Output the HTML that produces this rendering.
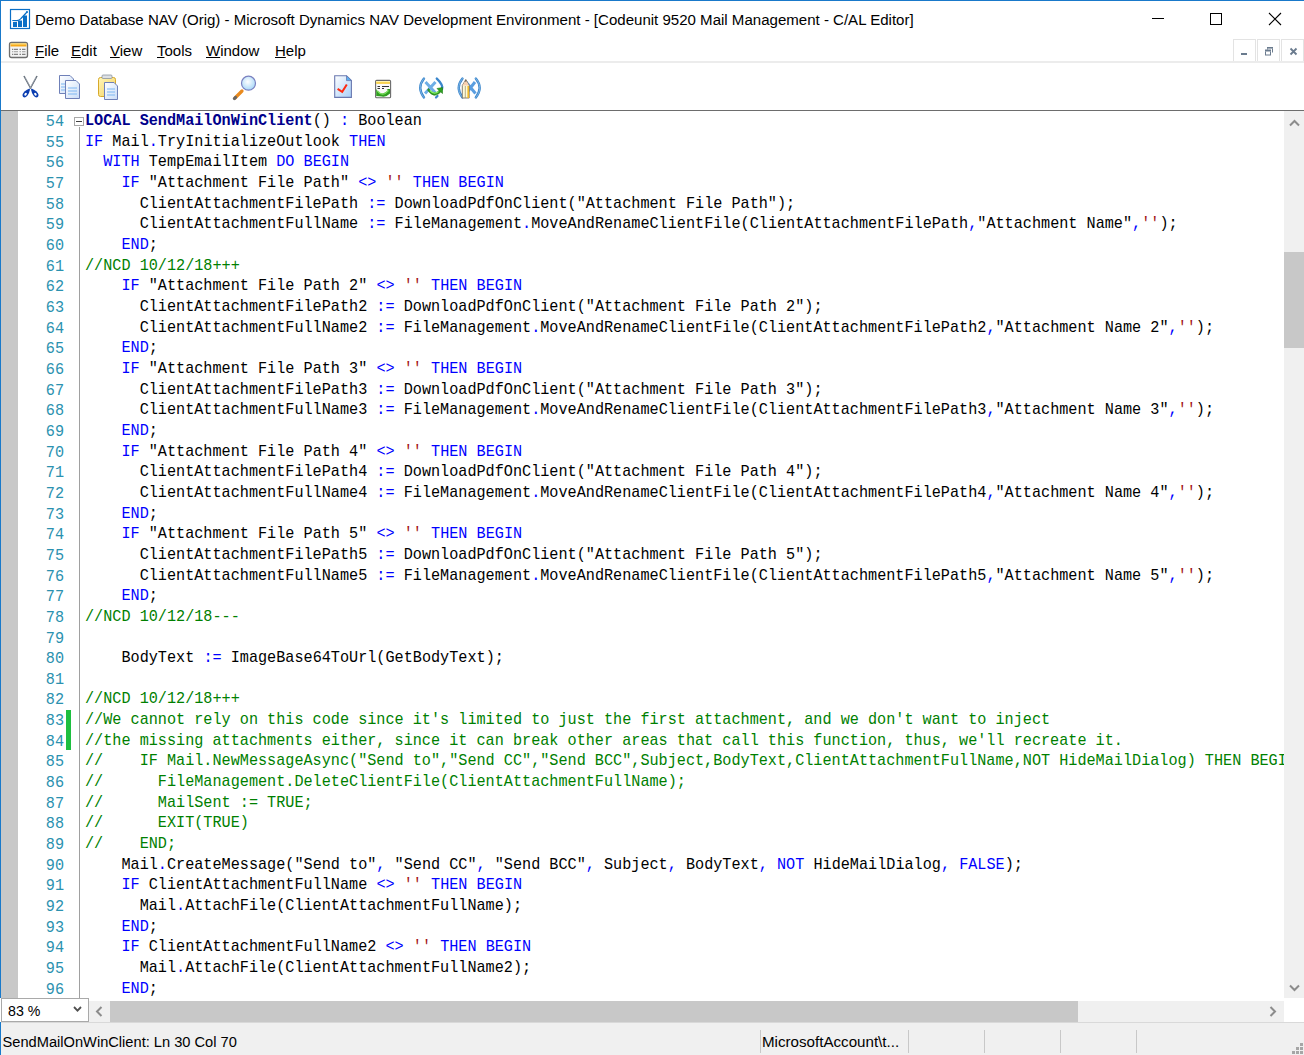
<!DOCTYPE html>
<html><head><meta charset="utf-8">
<style>
*{margin:0;padding:0;box-sizing:border-box}
html,body{width:1304px;height:1055px;overflow:hidden;background:#fff;position:relative;font-family:"Liberation Sans",sans-serif}
.abs{position:absolute}
svg{position:absolute;overflow:visible}
#wb-top{left:0;top:0;width:1304px;height:1px;background:#1979ca}
#wb-left{left:0;top:0;width:1px;height:1055px;background:#1979ca}
#title{left:35px;top:10px;font-size:15.05px;color:#000;white-space:pre;line-height:20px}
.mi{position:absolute;top:41px;font-size:15px;line-height:20px;white-space:pre;color:#000}
.mi u{text-decoration:underline;text-decoration-thickness:1px;text-underline-offset:1px}
#sep1{left:1px;top:61px;width:1303px;height:2px;background:#ececec}
#tbline{left:1px;top:110px;width:1303px;height:1px;background:#6d6d6d}
#editor{left:0;top:111px;width:1284px;height:887px;overflow:hidden}
#margin{left:1px;top:0;width:17px;height:887px;background:#c8c8c8}
#vline{left:79px;top:16px;width:1px;height:871px;background:#a0a0a0}
.ln{position:absolute;left:0;height:21px;width:1284px;font-family:"Liberation Mono",monospace;font-size:15.18px;line-height:20.66px;white-space:pre}
.num{position:absolute;top:1px;right:1220px;color:#2b91af;transform:scaleY(1.09);transform-origin:0 14.4px}
.code{position:absolute;left:85px;color:#000;transform:scaleY(1.09);transform-origin:0 14.4px}
.k{color:#0000ff}.o{color:#0000ff}.s{color:#a31515}.c{color:#008000}.b{color:#00008b;font-weight:bold}
#vsb{left:1284px;top:111px;width:20px;height:887px;background:#f0f0f0}
#vthumb{left:1284px;top:252px;width:20px;height:96px;background:#c8c8c8}
.sep{top:1030px;width:1px;height:23px;background:#c8c8c8}
#hrow{left:0;top:998px;width:1304px;height:24px;background:#fff}
#hsb{left:89px;top:1001px;width:1195px;height:21px;background:#f0f0f0}
#hthumb{left:110px;top:1001px;width:968px;height:21px;background:#c8c8c8}
#combo{left:1px;top:998px;width:88px;height:24px;border:1px solid #a9a9a9;background:#fff}
#status{left:1px;top:1022px;width:1303px;height:33px;background:#f0f0f0;border-top:1px solid #d9d9d9}
#stext{left:2.5px;top:1032px;font-size:14.65px;line-height:20px;white-space:pre;color:#000}
.mdib{position:absolute;top:39px;width:23px;height:23px;border:1px solid #e3e3e3;background:#fff}
</style></head><body>
<div id="wb-top" class="abs"></div>
<div id="wb-left" class="abs"></div>
<!-- app icon -->
<svg style="left:0;top:0" width="40" height="40" viewBox="0 0 40 40">
 <rect x="10.5" y="9.5" width="19" height="19" fill="#fff" stroke="#0a6fc6" stroke-width="1.2"/>
 <rect x="13" y="22" width="4" height="5" fill="#0a6fc6"/>
 <rect x="18" y="20.5" width="4" height="6.5" fill="#0a6fc6"/>
 <rect x="23" y="15.5" width="4" height="11.5" fill="#0a6fc6"/>
 <path d="M12.3 20.5 L17 20.6 Q19.5 20.4 21 18.5 L27 12" fill="none" stroke="#0a6fc6" stroke-width="1.2"/>
 <circle cx="27" cy="12" r="1" fill="#0a6fc6"/>
</svg>
<div id="title" class="abs">Demo Database NAV (Orig) - Microsoft Dynamics NAV Development Environment - [Codeunit 9520 Mail Management - C/AL Editor]</div>
<!-- window controls -->
<svg style="left:1140px;top:0" width="164" height="38" viewBox="0 0 164 38">
 <line x1="12" y1="18.5" x2="24" y2="18.5" stroke="#000" stroke-width="1"/>
 <rect x="70.5" y="13.5" width="11" height="11" fill="none" stroke="#000" stroke-width="1"/>
 <path d="M129 13 L141 25 M141 13 L129 25" stroke="#000" stroke-width="1.1"/>
</svg>
<!-- menu icon -->
<svg style="left:0;top:38px" width="34" height="24" viewBox="0 0 34 24">
 <rect x="9.5" y="4.5" width="18" height="15" rx="2" fill="#f4f4f4" stroke="#6e6e6e" stroke-width="1.3"/>
 <rect x="10.5" y="5.5" width="16" height="3" fill="#f7a91a"/>
 <rect x="10.5" y="5.5" width="16" height="1" fill="#fbe58a"/>
 <g fill="#666">
  <rect x="12" y="10.8" width="1.3" height="1"/><rect x="14" y="10.8" width="4" height="1"/><rect x="19.5" y="10.8" width="1.5" height="1"/><rect x="22" y="10.8" width="3.5" height="1"/>
  <rect x="12" y="13.2" width="1.3" height="1" opacity=".6"/><rect x="14" y="13.2" width="4" height="1" opacity=".6"/><rect x="19.5" y="13.2" width="1.5" height="1" opacity=".6"/><rect x="22" y="13.2" width="3.5" height="1" opacity=".6"/>
  <rect x="12" y="15.8" width="1.3" height="1"/><rect x="14" y="15.8" width="4" height="1"/><rect x="19.5" y="15.8" width="1.5" height="1"/><rect x="22" y="15.8" width="3.5" height="1"/>
 </g>
</svg>
<span class="mi" style="left:35px"><u>F</u>ile</span>
<span class="mi" style="left:71px"><u>E</u>dit</span>
<span class="mi" style="left:110px"><u>V</u>iew</span>
<span class="mi" style="left:157px"><u>T</u>ools</span>
<span class="mi" style="left:206px"><u>W</u>indow</span>
<span class="mi" style="left:275px"><u>H</u>elp</span>
<!-- MDI buttons -->
<div class="mdib" style="left:1233px"></div>
<div class="mdib" style="left:1257px"></div>
<div class="mdib" style="left:1281px"></div>
<svg style="left:1233px;top:39px" width="71" height="23" viewBox="0 0 71 23">
 <rect x="8" y="14" width="6" height="2" fill="#6a7b8e"/>
 <g fill="#6a7b8e">
  <rect x="32" y="10.5" width="6" height="2"/><rect x="32" y="12.5" width="1" height="3.5"/><rect x="37" y="12.5" width="1" height="3.5"/><rect x="32" y="15.5" width="6" height="1"/>
  <rect x="34" y="8" width="6" height="1.6"/><rect x="39" y="9.5" width="1" height="4"/><rect x="34" y="9.5" width="1" height="1"/>
 </g>
 <path d="M57.5 9.5 L63.5 15.5 M63.5 9.5 L57.5 15.5" stroke="#6a7b8e" stroke-width="1.8"/>
</svg>
<div id="sep1" class="abs"></div>
<!-- toolbar icons -->
<svg style="left:0;top:63px" width="500" height="47" viewBox="0 0 500 47">
 <defs>
  <linearGradient id="pg" x1="0" y1="0" x2="1" y2="1"><stop offset="0" stop-color="#ffffff"/><stop offset="1" stop-color="#c9dcf7"/></linearGradient>
  <linearGradient id="cb" x1="0" y1="0" x2="1" y2="1"><stop offset="0" stop-color="#fff6b8"/><stop offset="1" stop-color="#f4d060"/></linearGradient>
  <radialGradient id="lens" cx=".45" cy=".4" r=".6"><stop offset="0" stop-color="#ffffff"/><stop offset="1" stop-color="#a8d8f8"/></radialGradient>
 </defs>
 <!-- scissors -->
 <path d="M24 13 L30.8 25.5 M37 13 L30.2 25.5" stroke="#505a66" stroke-width="1.5" fill="none"/>
 <path d="M24.6 13.6 L30.6 24.6 M36.4 13.6 L30.4 24.6" stroke="#d8dee6" stroke-width=".5" fill="none"/>
 <path d="M29.5 25.5 Q27 26.5 24.5 28.5 Q21.5 31.5 23 33.8 Q25 35.5 27.5 32.5 Q29.5 29.5 30 26.5 Z" fill="#0a3db0"/>
 <path d="M31.5 25.5 Q34 26.5 36.5 28.5 Q39.5 31.5 38 33.8 Q36 35.5 33.5 32.5 Q31.5 29.5 31 26.5 Z" fill="#0a3db0"/>
 <ellipse cx="25.6" cy="31.2" rx="1.1" ry="1.6" fill="#fff" transform="rotate(35 25.6 31.2)"/>
 <ellipse cx="35.4" cy="31.2" rx="1.1" ry="1.6" fill="#fff" transform="rotate(-35 35.4 31.2)"/>
 <!-- copy -->
 <path d="M59.5 12.5 H70 L73.5 16 V30.5 H59.5 Z" fill="url(#pg)" stroke="#6f80b8" stroke-width="1"/>
 <path d="M65.5 17.5 H76 L79.5 21 V35.5 H65.5 Z" fill="url(#pg)" stroke="#6f80b8" stroke-width="1"/>
 <g stroke="#8ec0f4" stroke-width="1.2"><line x1="68" y1="25" x2="77" y2="25"/><line x1="68" y1="28" x2="77" y2="28"/><line x1="68" y1="31" x2="77" y2="31"/><line x1="61" y1="21" x2="65" y2="21"/><line x1="61" y1="24" x2="65" y2="24"/><line x1="61" y1="27" x2="65" y2="27"/></g>
 <!-- paste -->
 <rect x="98.5" y="14.5" width="17" height="19" rx="2" fill="url(#cb)" stroke="#d7a92a" stroke-width="1"/>
 <rect x="102" y="12" width="10" height="3.5" rx="1" fill="#dde0e4" stroke="#8a94a0" stroke-width=".8"/>
 <path d="M104.5 19.5 H114 L117.5 23 V36.5 H104.5 Z" fill="url(#pg)" stroke="#6f80b8" stroke-width="1"/>
 <g stroke="#8ec0f4" stroke-width="1.2"><line x1="107" y1="26" x2="115" y2="26"/><line x1="107" y1="29" x2="115" y2="29"/><line x1="107" y1="32" x2="115" y2="32"/></g>
 <!-- magnifier -->
 <path d="M235 35 L242 28" stroke="#e98a1e" stroke-width="3.2" stroke-linecap="round"/>
 <path d="M234.3 35.6 L235.6 34.4" stroke="#666" stroke-width="3" stroke-linecap="round"/>
 <circle cx="248.5" cy="20.2" r="7" fill="url(#lens)" stroke="#7a80c0" stroke-width="1.2"/>
 <!-- doc check -->
 <linearGradient id="pg2" x1="0" y1="0" x2="1" y2="1"><stop offset="0" stop-color="#ffffff"/><stop offset="1" stop-color="#a8cff8"/></linearGradient>
 <path d="M334.7 12.7 H346.5 L351.4 17.6 V34.4 H334.7 Z" fill="url(#pg2)" stroke="#6a78b0" stroke-width="1.1"/>
 <path d="M346.5 12.7 V17.6 H351.4 Z" fill="#5ab0f0" stroke="#6a78b0" stroke-width=".8"/>
 <path d="M337.6 25.8 L342.2 28.8 L346.8 21.5" stroke="#ff2a10" stroke-width="2" fill="none"/>
 <!-- green table -->
 <rect x="375.6" y="17.4" width="15" height="17.3" rx="1" fill="#fafafa" stroke="#6a6a6a" stroke-width="1.1"/>
 <rect x="376.2" y="18" width="13.8" height="2.8" fill="#f8cc38"/>
 <rect x="376.2" y="18" width="13.8" height="1.2" fill="#fff4b0"/>
 <g stroke="#333" stroke-width="1"><line x1="377.5" y1="23.5" x2="380" y2="23.5"/><line x1="382" y1="23.5" x2="389" y2="23.5"/><line x1="377.5" y1="25.5" x2="380" y2="25.5"/><line x1="382" y1="25.5" x2="384" y2="25.5"/></g>
 <path d="M376.2 26 Q380 32 384 30 Q387 29 388 27 L386.5 26 L390 26 L390 30.5 Q386 34.5 382 33.5 L376.2 33 Z" fill="#2f9f1f"/>
 <path d="M377.5 28 Q381 32.5 385 30.5 L388.5 27.5" stroke="#7ee060" stroke-width="1.3" fill="none"/>
 <!-- (X) refresh -->
 <g fill="none" stroke-linecap="round">
  <path d="M424 15.6 Q416.5 25 424 34.4" stroke="#3a86cc" stroke-width="2.4"/>
  <path d="M436.8 15.6 Q443.5 22 442 26" stroke="#3a86cc" stroke-width="2.4"/>
  <path d="M424 15.6 Q416.5 25 424 34.4" stroke="#b8dcf8" stroke-width=".6" stroke-dasharray="1 1"/>
  <path d="M437.5 33 L436 34.5" stroke="#3a86cc" stroke-width="2.2"/>
 </g>
 <path d="M425.5 19 L436 30.5 M435.5 19 L425 30.5" stroke="#6eaee6" stroke-width="3"/>
 <path d="M428.5 25.5 Q434 33 439 27.5 L437 25.5 L442.5 24.5 L442.5 30.5 L440.8 29 Q434 36.5 427.5 27 Z" fill="#2fa020" stroke="#1c7a14" stroke-width=".6"/>
 <path d="M430 27.5 Q434 32 438.5 28.5" stroke="#8af070" stroke-width="1.2" fill="none"/>
 <!-- (X) pencil -->
 <g fill="none" stroke-linecap="round">
  <path d="M462.5 15.6 Q455 25 462.5 34.4" stroke="#3a86cc" stroke-width="2.4"/>
  <path d="M475.8 15.6 Q483.5 25 475.8 34.4" stroke="#3a86cc" stroke-width="2.4"/>
  <path d="M462.5 15.6 Q455 25 462.5 34.4" stroke="#b8dcf8" stroke-width=".6" stroke-dasharray="1 1"/>
  <path d="M475.8 15.6 Q483.5 25 475.8 34.4" stroke="#b8dcf8" stroke-width=".6" stroke-dasharray="1 1"/>
 </g>
 <path d="M466 19 L475.5 30.5 M475 19 L466 30.5" stroke="#5a9ee0" stroke-width="3"/>
 <path d="M462.3 22.5 L465.8 16.5 L469.2 22.5 V35 H462.3 Z" fill="#fffbd8" stroke="#7a7060" stroke-width=".9"/>
 <path d="M462.6 22.5 L465.8 17 L469 22.5 Z" fill="#f8d0b0"/>
 <path d="M465 18.5 L465.8 16.5 L466.6 18.5 Z" fill="#333"/>
 <rect x="467.4" y="23" width="1.6" height="12" fill="#f0b828"/>
 <line x1="465.3" y1="23" x2="465.3" y2="35" stroke="#a09878" stroke-width=".8"/>
</svg>
<div id="tbline" class="abs"></div>
<div id="editor" class="abs">
<div id="margin" class="abs"></div>
<div id="vline" class="abs"></div>
<div class="abs" style="left:74px;top:6px;width:10px;height:9px;border:1px solid #a8a8a8;background:#fff"></div>
<div class="abs" style="left:76px;top:10px;width:6px;height:1px;background:#404040"></div>
<div class="abs" style="left:66px;top:599px;width:5px;height:40px;background:#1dbf3f"></div>
<div class="ln" style="top:0.00px"><span class="num">54</span><span class="code"><span class="b">LOCAL SendMailOnWinClient</span>() <span class="o">:</span> Boolean</span></div>
<div class="ln" style="top:20.66px"><span class="num">55</span><span class="code"><span class="k">IF</span> Mail<span class="o">.</span>TryInitializeOutlook <span class="k">THEN</span></span></div>
<div class="ln" style="top:41.32px"><span class="num">56</span><span class="code">  <span class="k">WITH</span> TempEmailItem <span class="k">DO</span> <span class="k">BEGIN</span></span></div>
<div class="ln" style="top:61.98px"><span class="num">57</span><span class="code">    <span class="k">IF</span> "Attachment File Path" <span class="o">&lt;&gt;</span> <span class="s">''</span> <span class="k">THEN</span> <span class="k">BEGIN</span></span></div>
<div class="ln" style="top:82.64px"><span class="num">58</span><span class="code">      ClientAttachmentFilePath <span class="o">:=</span> DownloadPdfOnClient("Attachment File Path");</span></div>
<div class="ln" style="top:103.30px"><span class="num">59</span><span class="code">      ClientAttachmentFullName <span class="o">:=</span> FileManagement<span class="o">.</span>MoveAndRenameClientFile(ClientAttachmentFilePath<span class="o">,</span>"Attachment Name"<span class="o">,</span><span class="s">''</span>);</span></div>
<div class="ln" style="top:123.96px"><span class="num">60</span><span class="code">    <span class="k">END</span>;</span></div>
<div class="ln" style="top:144.62px"><span class="num">61</span><span class="code"><span class="c">//NCD 10/12/18+++</span></span></div>
<div class="ln" style="top:165.28px"><span class="num">62</span><span class="code">    <span class="k">IF</span> "Attachment File Path 2" <span class="o">&lt;&gt;</span> <span class="s">''</span> <span class="k">THEN</span> <span class="k">BEGIN</span></span></div>
<div class="ln" style="top:185.94px"><span class="num">63</span><span class="code">      ClientAttachmentFilePath2 <span class="o">:=</span> DownloadPdfOnClient("Attachment File Path 2");</span></div>
<div class="ln" style="top:206.60px"><span class="num">64</span><span class="code">      ClientAttachmentFullName2 <span class="o">:=</span> FileManagement<span class="o">.</span>MoveAndRenameClientFile(ClientAttachmentFilePath2<span class="o">,</span>"Attachment Name 2"<span class="o">,</span><span class="s">''</span>);</span></div>
<div class="ln" style="top:227.26px"><span class="num">65</span><span class="code">    <span class="k">END</span>;</span></div>
<div class="ln" style="top:247.92px"><span class="num">66</span><span class="code">    <span class="k">IF</span> "Attachment File Path 3" <span class="o">&lt;&gt;</span> <span class="s">''</span> <span class="k">THEN</span> <span class="k">BEGIN</span></span></div>
<div class="ln" style="top:268.58px"><span class="num">67</span><span class="code">      ClientAttachmentFilePath3 <span class="o">:=</span> DownloadPdfOnClient("Attachment File Path 3");</span></div>
<div class="ln" style="top:289.24px"><span class="num">68</span><span class="code">      ClientAttachmentFullName3 <span class="o">:=</span> FileManagement<span class="o">.</span>MoveAndRenameClientFile(ClientAttachmentFilePath3<span class="o">,</span>"Attachment Name 3"<span class="o">,</span><span class="s">''</span>);</span></div>
<div class="ln" style="top:309.90px"><span class="num">69</span><span class="code">    <span class="k">END</span>;</span></div>
<div class="ln" style="top:330.56px"><span class="num">70</span><span class="code">    <span class="k">IF</span> "Attachment File Path 4" <span class="o">&lt;&gt;</span> <span class="s">''</span> <span class="k">THEN</span> <span class="k">BEGIN</span></span></div>
<div class="ln" style="top:351.22px"><span class="num">71</span><span class="code">      ClientAttachmentFilePath4 <span class="o">:=</span> DownloadPdfOnClient("Attachment File Path 4");</span></div>
<div class="ln" style="top:371.88px"><span class="num">72</span><span class="code">      ClientAttachmentFullName4 <span class="o">:=</span> FileManagement<span class="o">.</span>MoveAndRenameClientFile(ClientAttachmentFilePath4<span class="o">,</span>"Attachment Name 4"<span class="o">,</span><span class="s">''</span>);</span></div>
<div class="ln" style="top:392.54px"><span class="num">73</span><span class="code">    <span class="k">END</span>;</span></div>
<div class="ln" style="top:413.20px"><span class="num">74</span><span class="code">    <span class="k">IF</span> "Attachment File Path 5" <span class="o">&lt;&gt;</span> <span class="s">''</span> <span class="k">THEN</span> <span class="k">BEGIN</span></span></div>
<div class="ln" style="top:433.86px"><span class="num">75</span><span class="code">      ClientAttachmentFilePath5 <span class="o">:=</span> DownloadPdfOnClient("Attachment File Path 5");</span></div>
<div class="ln" style="top:454.52px"><span class="num">76</span><span class="code">      ClientAttachmentFullName5 <span class="o">:=</span> FileManagement<span class="o">.</span>MoveAndRenameClientFile(ClientAttachmentFilePath5<span class="o">,</span>"Attachment Name 5"<span class="o">,</span><span class="s">''</span>);</span></div>
<div class="ln" style="top:475.18px"><span class="num">77</span><span class="code">    <span class="k">END</span>;</span></div>
<div class="ln" style="top:495.84px"><span class="num">78</span><span class="code"><span class="c">//NCD 10/12/18---</span></span></div>
<div class="ln" style="top:516.50px"><span class="num">79</span><span class="code"></span></div>
<div class="ln" style="top:537.16px"><span class="num">80</span><span class="code">    BodyText <span class="o">:=</span> ImageBase64ToUrl(GetBodyText);</span></div>
<div class="ln" style="top:557.82px"><span class="num">81</span><span class="code"></span></div>
<div class="ln" style="top:578.48px"><span class="num">82</span><span class="code"><span class="c">//NCD 10/12/18+++</span></span></div>
<div class="ln" style="top:599.14px"><span class="num">83</span><span class="code"><span class="c">//We cannot rely on this code since it's limited to just the first attachment, and we don't want to inject</span></span></div>
<div class="ln" style="top:619.80px"><span class="num">84</span><span class="code"><span class="c">//the missing attachments either, since it can break other areas that call this function, thus, we'll recreate it.</span></span></div>
<div class="ln" style="top:640.46px"><span class="num">85</span><span class="code"><span class="c">//    IF Mail.NewMessageAsync("Send to","Send CC","Send BCC",Subject,BodyText,ClientAttachmentFullName,NOT HideMailDialog) THEN BEGIN</span></span></div>
<div class="ln" style="top:661.12px"><span class="num">86</span><span class="code"><span class="c">//      FileManagement.DeleteClientFile(ClientAttachmentFullName);</span></span></div>
<div class="ln" style="top:681.78px"><span class="num">87</span><span class="code"><span class="c">//      MailSent := TRUE;</span></span></div>
<div class="ln" style="top:702.44px"><span class="num">88</span><span class="code"><span class="c">//      EXIT(TRUE)</span></span></div>
<div class="ln" style="top:723.10px"><span class="num">89</span><span class="code"><span class="c">//    END;</span></span></div>
<div class="ln" style="top:743.76px"><span class="num">90</span><span class="code">    Mail<span class="o">.</span>CreateMessage("Send to"<span class="o">,</span> "Send CC"<span class="o">,</span> "Send BCC"<span class="o">,</span> Subject<span class="o">,</span> BodyText<span class="o">,</span> <span class="k">NOT</span> HideMailDialog<span class="o">,</span> <span class="k">FALSE</span>);</span></div>
<div class="ln" style="top:764.42px"><span class="num">91</span><span class="code">    <span class="k">IF</span> ClientAttachmentFullName <span class="o">&lt;&gt;</span> <span class="s">''</span> <span class="k">THEN</span> <span class="k">BEGIN</span></span></div>
<div class="ln" style="top:785.08px"><span class="num">92</span><span class="code">      Mail<span class="o">.</span>AttachFile(ClientAttachmentFullName);</span></div>
<div class="ln" style="top:805.74px"><span class="num">93</span><span class="code">    <span class="k">END</span>;</span></div>
<div class="ln" style="top:826.40px"><span class="num">94</span><span class="code">    <span class="k">IF</span> ClientAttachmentFullName2 <span class="o">&lt;&gt;</span> <span class="s">''</span> <span class="k">THEN</span> <span class="k">BEGIN</span></span></div>
<div class="ln" style="top:847.06px"><span class="num">95</span><span class="code">      Mail<span class="o">.</span>AttachFile(ClientAttachmentFullName2);</span></div>
<div class="ln" style="top:867.72px"><span class="num">96</span><span class="code">    <span class="k">END</span>;</span></div>
</div>
<div id="vsb" class="abs"></div>
<div id="vthumb" class="abs"></div>
<svg style="left:1284px;top:111px" width="20" height="887" viewBox="0 0 20 887">
 <path d="M6 14.5 L10.5 10 L15 14.5" fill="none" stroke="#8c8c8c" stroke-width="2"/>
 <path d="M6 874.5 L10.5 879 L15 874.5" fill="none" stroke="#8c8c8c" stroke-width="2"/>
</svg>
<div id="hrow" class="abs"></div>
<div id="hsb" class="abs"></div>
<div id="hthumb" class="abs"></div>
<svg style="left:89px;top:1001px" width="1195" height="21" viewBox="0 0 1195 21">
 <path d="M12.5 6 L8 10.5 L12.5 15" fill="none" stroke="#8c8c8c" stroke-width="2"/>
 <path d="M181.5 6 L186 10.5 L181.5 15" fill="none" stroke="#8c8c8c" stroke-width="2" transform="translate(1000 0)"/>
</svg>
<div id="combo" class="abs"><span style="position:absolute;left:6px;top:3px;font-size:14.2px;line-height:18px">83 %</span>
<svg style="left:71px;top:7px" width="10" height="8" viewBox="0 0 10 8"><path d="M1 1 L4.5 4.6 L8 1" fill="none" stroke="#505050" stroke-width="1.8"/></svg>
</div>
<div id="status" class="abs"></div>
<div id="stext" class="abs">SendMailOnWinClient: Ln 30 Col 70</div>
<div class="abs" style="left:762px;top:1032px;font-size:15.15px;line-height:20px;white-space:pre">MicrosoftAccount\t...</div>
<div class="sep abs" style="left:760px"></div>
<div class="sep abs" style="left:908px"></div>
<div class="sep abs" style="left:984px"></div>
<div class="sep abs" style="left:1060px"></div>
<div class="sep abs" style="left:1136px"></div>
<svg style="left:1284px;top:1034px" width="20" height="21" viewBox="0 0 20 21"><g fill="#a6a6a6">
 <rect x="16" y="9" width="3" height="3"/><rect x="12" y="13" width="3" height="3"/><rect x="16" y="13" width="3" height="3"/>
 <rect x="8" y="17" width="3" height="3"/><rect x="12" y="17" width="3" height="3"/><rect x="16" y="17" width="3" height="3"/></g></svg>
</body></html>
